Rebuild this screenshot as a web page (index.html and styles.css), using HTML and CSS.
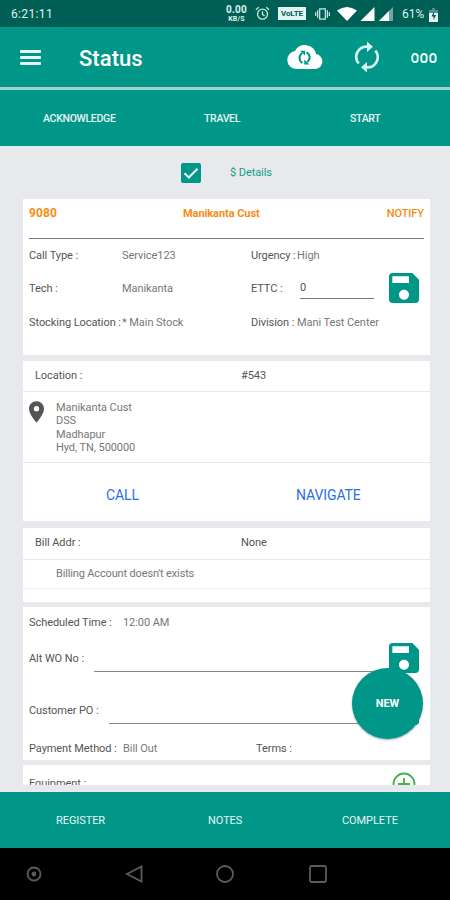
FILE: index.html
```html
<!DOCTYPE html>
<html lang="en">
<head>
<meta charset="utf-8">
<title>Status</title>
<link rel="stylesheet" href="styles.css">
</head>
<body>
<div class="screen">
  <div class="statusbar">
    <span class="clock">6:21:11</span>
    <span class="rate"><b>0.00</b><i>KB/S</i></span>
    <svg class="alarm" viewBox="0 0 16 16"><circle cx="8" cy="8.7" r="5.3"/><path d="M8 5.500v3.500l2.300 1.500M1 4l3-2.600M15 4l-3-2.600"/></svg>
    <span class="volte">VoLTE</span>
    <svg class="vibrate" viewBox="0 0 16 14"><path d="M5 1.500h6v11H5zM2.800 3v8M13.200 3v8M.7 5v4M15.300 5v4"/></svg>
    <svg class="wifi" viewBox="0 0 20 14"><path d="M0 3.500Q10-3.500 20 3.500L10 14z"/></svg>
    <svg class="signal" viewBox="0 0 14 14"><path d="M14 0v14H0z"/></svg>
    <svg class="signal second" viewBox="0 0 14 14"><path d="M14 0v14H0z" opacity=".45"/><path d="M10 4v10H0z"/></svg>
    <span class="percent">61%</span>
    <svg class="battery" viewBox="0 0 9 14"><path d="M3 0h3v2h3v12H0V2h3z" opacity=".35"/><path d="M0 5h9v9H0z"/><path d="M5 3.500L2.500 8.500h2v3.500l2.700-5H5z" fill="#005f54"/></svg>
  </div>
  <header class="appbar">
    <span class="burger"><i></i><i></i><i></i></span>
    <h1>Status</h1>
    <svg class="cloud" viewBox="0 0 36 24"><path d="M29 9.100A11.300 11.300 0 0 0 8 6.100A9 9 0 0 0 9 24h19.500a7.500 7.500 0 0 0 .5-14.900z" fill="#fff"/><g fill="none" stroke="#009688" stroke-width="2"><path d="M15.500 18A5.700 5.700 0 0 1 15.200 8.200M19.500 7.300A5.700 5.700 0 0 1 20.300 17"/></g><path d="M13.200 5.800h5v5zM22.300 19.400h-5v-5z" fill="#009688"/></svg>
    <svg class="sync" viewBox="0 0 24 32"><g fill="none" stroke="#d5f3ef" stroke-width="2.700"><path d="M3.700 22.500A10.300 10.300 0 0 1 13 5.700M20.300 9.500A10.300 10.300 0 0 1 11 26.300"/></g><path d="M12 .5l6 5.300-6 5.200zM12 21l-6 5.200 6 5.300z" fill="#d5f3ef"/></svg>
    <svg class="more" viewBox="0 0 26 10"><g fill="none" stroke="#e5fffb" stroke-width="1.900"><rect x="1.300" y="1" width="5.400" height="8" rx="2.600"/><rect x="10.300" y="1" width="5.400" height="8" rx="2.600"/><rect x="19.300" y="1" width="5.400" height="8" rx="2.600"/></g></svg>
  </header>
  <nav class="tabs"><span>ACKNOWLEDGE</span><span>TRAVEL</span><span>START</span></nav>
  <main class="content">
    <div class="option">
      <svg class="check" viewBox="0 0 20 20"><rect width="20" height="20" rx="2" fill="#009688"/><path d="M3.500 10.300l4.300 4.200 8.700-8.800" fill="none" stroke="#e8f6f5" stroke-width="2.200"/></svg>
      <span>$ Details</span>
    </div>
    <section class="card order">
      <div class="title"><span class="num">9080</span><span class="cust">Manikanta Cust</span><span class="notify">NOTIFY</span></div>
      <div class="fields">
        <span>Call Type :</span><span class="val">Service123</span><span>Urgency :</span><span class="val">High</span>
      </div>
      <div class="fields tall">
        <span>Tech :</span><span class="val">Manikanta</span><span>ETTC :</span>
        <div class="edit"><span class="ettc">0</span><svg class="save" viewBox="3 3 18 18"><path d="M17 3H5c-1.110 0-2 .9-2 2v14c0 1.100.89 2 2 2h14c1.100 0 2-.9 2-2V7l-4-4zm-5 16c-1.660 0-3-1.340-3-3s1.340-3 3-3 3 1.340 3 3-1.340 3-3 3zm3-10H5V5h10v4z"/></svg></div>
      </div>
      <div class="fields tall">
        <span>Stocking Location :</span><span class="val">* Main Stock</span><span>Division :</span><span class="val">Mani Test Center</span>
      </div>
    </section>
    <section class="card location">
      <div class="pair"><span>Location :</span><span>#543</span></div>
      <div class="address">
        <svg class="pin" viewBox="5 2 14 20"><path d="M12 2C8.130 2 5 5.130 5 9c0 5.250 7 13 7 13s7-7.750 7-13c0-3.870-3.130-7-7-7zm0 9.500a2.500 2.500 0 0 1 0-5 2.500 2.500 0 0 1 0 5z"/></svg>
        <p>Manikanta Cust<br>DSS<br>Madhapur<br>Hyd, TN, 500000</p>
      </div>
      <div class="actions"><span>CALL</span><span>NAVIGATE</span></div>
    </section>
    <section class="card billing">
      <div class="pair"><span>Bill Addr :</span><span>None</span></div>
      <div class="note">Billing Account doesn't exists</div>
    </section>
    <section class="card schedule">
      <div class="line sched"><span class="lbl">Scheduled Time :</span><span class="val">12:00 AM</span></div>
      <div class="line alt"><span class="lbl">Alt WO No :</span><span class="input"></span><svg class="save" viewBox="3 3 18 18"><path d="M17 3H5c-1.110 0-2 .9-2 2v14c0 1.100.89 2 2 2h14c1.100 0 2-.9 2-2V7l-4-4zm-5 16c-1.660 0-3-1.340-3-3s1.340-3 3-3 3 1.340 3 3-1.340 3-3 3zm3-10H5V5h10v4z"/></svg></div>
      <div class="line po"><span class="lbl">Customer PO :</span><span class="input"></span><svg class="save" viewBox="3 3 18 18"><path d="M17 3H5c-1.110 0-2 .9-2 2v14c0 1.100.89 2 2 2h14c1.100 0 2-.9 2-2V7l-4-4zm-5 16c-1.660 0-3-1.340-3-3s1.340-3 3-3 3 1.340 3 3-1.340 3-3 3zm3-10H5V5h10v4z"/></svg></div>
      <div class="line pay"><span class="lbl">Payment Method :</span><span class="val">Bill Out</span><span>Terms :</span></div>
    </section>
    <section class="card equipment">
      <span>Equipment :</span>
      <svg class="add" viewBox="0 0 24 24"><circle cx="12" cy="12" r="10.500"/><path d="M12 6v12M6 12h12"/></svg>
    </section>
    <div class="fab">NEW</div>
  </main>
  <footer class="bottom"><span>REGISTER</span><span>NOTES</span><span>COMPLETE</span></footer>
  <div class="sysnav">
    <svg viewBox="0 0 20 20"><circle cx="10" cy="10" r="6.500"/><circle cx="10" cy="10" r="1.500" fill="#5c5c5c"/></svg>
    <svg class="back" viewBox="0 0 20 20"><path d="M17.500 2.500v15L3 10z"/></svg>
    <svg class="home" viewBox="0 0 20 20"><circle cx="10" cy="10" r="8"/></svg>
    <svg class="recent" viewBox="0 0 20 20"><rect x="2" y="2" width="16" height="16" rx="1.500"/></svg>
  </div>
</div>
</body>
</html>
```
FILE: styles.css
```css
* { box-sizing: border-box; }
body { margin: 0; font-family: Roboto, "Liberation Sans", sans-serif; font-size: 11px; letter-spacing: -.07px; color: #555; }
.screen { width: 450px; height: 900px; display: flex; flex-direction: column; overflow: hidden; background: #e8e9ed; }
svg { display: block; flex: none; }
span { white-space: nowrap; }

.statusbar { height: 27px; flex: none; background: #005f54; color: #dff3f0; display: flex; align-items: center; padding-left: 11px; }
.clock { width: 214px; font-size: 12px; letter-spacing: .35px; }
.rate { width: 23px; display: flex; flex-direction: column; align-items: center; font-size: 10px; line-height: 11px; letter-spacing: .2px; }
.rate i { font-style: normal; font-weight: 700; font-size: 7px; line-height: 8px; }
.alarm { width: 15px; height: 15px; margin-left: 7px; fill: none; stroke: #cde9e5; stroke-width: 1.4; }
.volte { margin-left: 8px; width: 28px; height: 13px; background: #e2f3f1; color: #005f54; font-size: 8px; font-weight: 700; line-height: 13px; text-align: center; }
.vibrate { width: 15px; height: 14px; margin-left: 9px; fill: none; stroke: #cde9e5; stroke-width: 1.3; }
.wifi { width: 20px; height: 14px; margin-left: 7px; fill: #fff; }
.signal { width: 15px; height: 14px; margin-left: 3px; fill: #fff; }
.signal.second { width: 14px; margin-left: 4px; }
.percent { margin-left: 9px; width: 25px; font-size: 12px; letter-spacing: 0; }
.battery { width: 9px; height: 14px; margin-left: 2px; margin-top: 2px; fill: #e5f5f3; }

.appbar { height: 63px; flex: none; background: #009688; border-bottom: 3px solid #9dd3cc; display: flex; align-items: center; padding: 0 13px 0 20px; }
.burger { width: 21px; height: 15px; display: flex; flex-direction: column; justify-content: space-between; }
.burger i { height: 3px; background: #e6f7f5; border-radius: 1px; }
h1 { margin: 3px 0 0 38px; width: 208px; font-size: 22px; letter-spacing: .05px; font-weight: 500; color: #fff; line-height: 26px; }
.cloud { width: 36px; height: 24px; }
.sync { width: 24px; height: 32px; margin-left: 32px; }
.more { width: 26px; height: 10px; margin-left: auto; margin-top: 2px; }

.tabs { height: 57px; flex: none; background: #009688; border-bottom: 1px solid #d5eeeb; color: #e6f7f5; display: grid; grid-template-columns: 161px 146px 1fr; padding-left: 43px; align-items: center; font-size: 10.5px; letter-spacing: -.3px; font-weight: 500; }

.content { height: 645px; flex: none; position: relative; padding: 0 20px 0 23px; overflow: hidden; }
.option { height: 52px; display: flex; align-items: center; padding-left: 158px; color: #179c83; }
.option span { margin-left: 29px; margin-top: -2px; }
.check { width: 20px; height: 20px; }
.card { background: #fff; width: 407px; }
.val { color: #777; }

.order { height: 156px; padding: 0 6px; }
.title { height: 40px; border-bottom: 1px solid #777; display: grid; grid-template-columns: 154px 1fr auto; line-height: 29px; color: #f78c12; font-weight: 700; }
.title .num { font-size: 12px; letter-spacing: .15px; }
.title .notify { font-weight: 500; }
.fields { display: grid; grid-template-columns: 93px 129px 46px 1fr; height: 32px; align-items: center; }
.fields.tall { height: 34px; }
.edit { display: flex; align-items: center; justify-content: space-between; padding-left: 3px; padding-right: 5px; }
.ettc { width: 74px; height: 21px; line-height: 20px; border-bottom: 1px solid #777; }
.save { width: 30px; height: 30px; fill: #009688; }

.location { height: 160px; margin-top: 6px; }
.pair { height: 31px; border-bottom: 1px solid #e8e9ec; display: grid; grid-template-columns: 206px 1fr; padding-left: 12px; align-items: center; }
.location .pair { padding-bottom: 1px; }
.address { height: 71px; border-bottom: 1px solid #e8e9ec; display: flex; padding: 9px 0 0 6px; }
.pin { width: 15px; height: 22px; fill: #555; }
.address p { margin: 0 0 0 12px; line-height: 13.3px; color: #777; }
.actions { height: 64px; display: grid; grid-template-columns: 190px 1fr; padding-left: 83px; align-items: center; font-size: 14px; letter-spacing: -.1px; color: #2d6fe8; }

.billing { height: 74px; margin-top: 7px; }
.billing .pair { height: 32px; padding-bottom: 3px; }
.note { height: 29px; line-height: 28px; padding-left: 33px; border-bottom: 1px solid #eeeef1; color: #777; letter-spacing: -.15px; }

.schedule { height: 153px; margin-top: 5px; padding: 0 6px; }
.line { display: flex; align-items: center; }
.sched { height: 30px; }
.sched .lbl, .pay .lbl { width: 94px; }
.alt { height: 43px; }
.alt .lbl { width: 65px; }
.input { flex: 1; margin-top: 26px; height: 1px; background: #888; }
.line .save { margin: -1px 5px 0 -25px; }
.po { height: 60px; }
.po .lbl { width: 80px; }
.pay { height: 17px; }
.pay .val { width: 133px; }

.equipment { height: 20px; margin-top: 5px; padding: 6px 14px 0 6px; display: flex; justify-content: space-between; overflow: hidden; line-height: 26px; }
.add { width: 24px; height: 24px; margin-top: 1px; fill: none; stroke: #4caf50; stroke-width: 1.900; }
.fab { position: absolute; left: 352px; top: 521px; width: 71px; height: 71px; border-radius: 50%; background: #009688; color: #fff; font-weight: 700; line-height: 71px; text-align: center; box-shadow: 0 1px 2px rgba(60,90,120,.5); }

.bottom { height: 56px; flex: none; background: #009688; color: #e6f7f5; display: grid; grid-template-columns: 152px 134px 1fr; padding-left: 56px; align-items: center; }
.sysnav { flex: 1; background: #000; display: flex; padding-left: 24px; align-items: center; }
.sysnav svg { width: 20px; height: 20px; fill: none; stroke: #5c5c5c; stroke-width: 1.800; }
.sysnav .back { margin-left: 80px; }
.sysnav .home { margin-left: 71px; }
.sysnav .recent { margin-left: 73px; }
```
